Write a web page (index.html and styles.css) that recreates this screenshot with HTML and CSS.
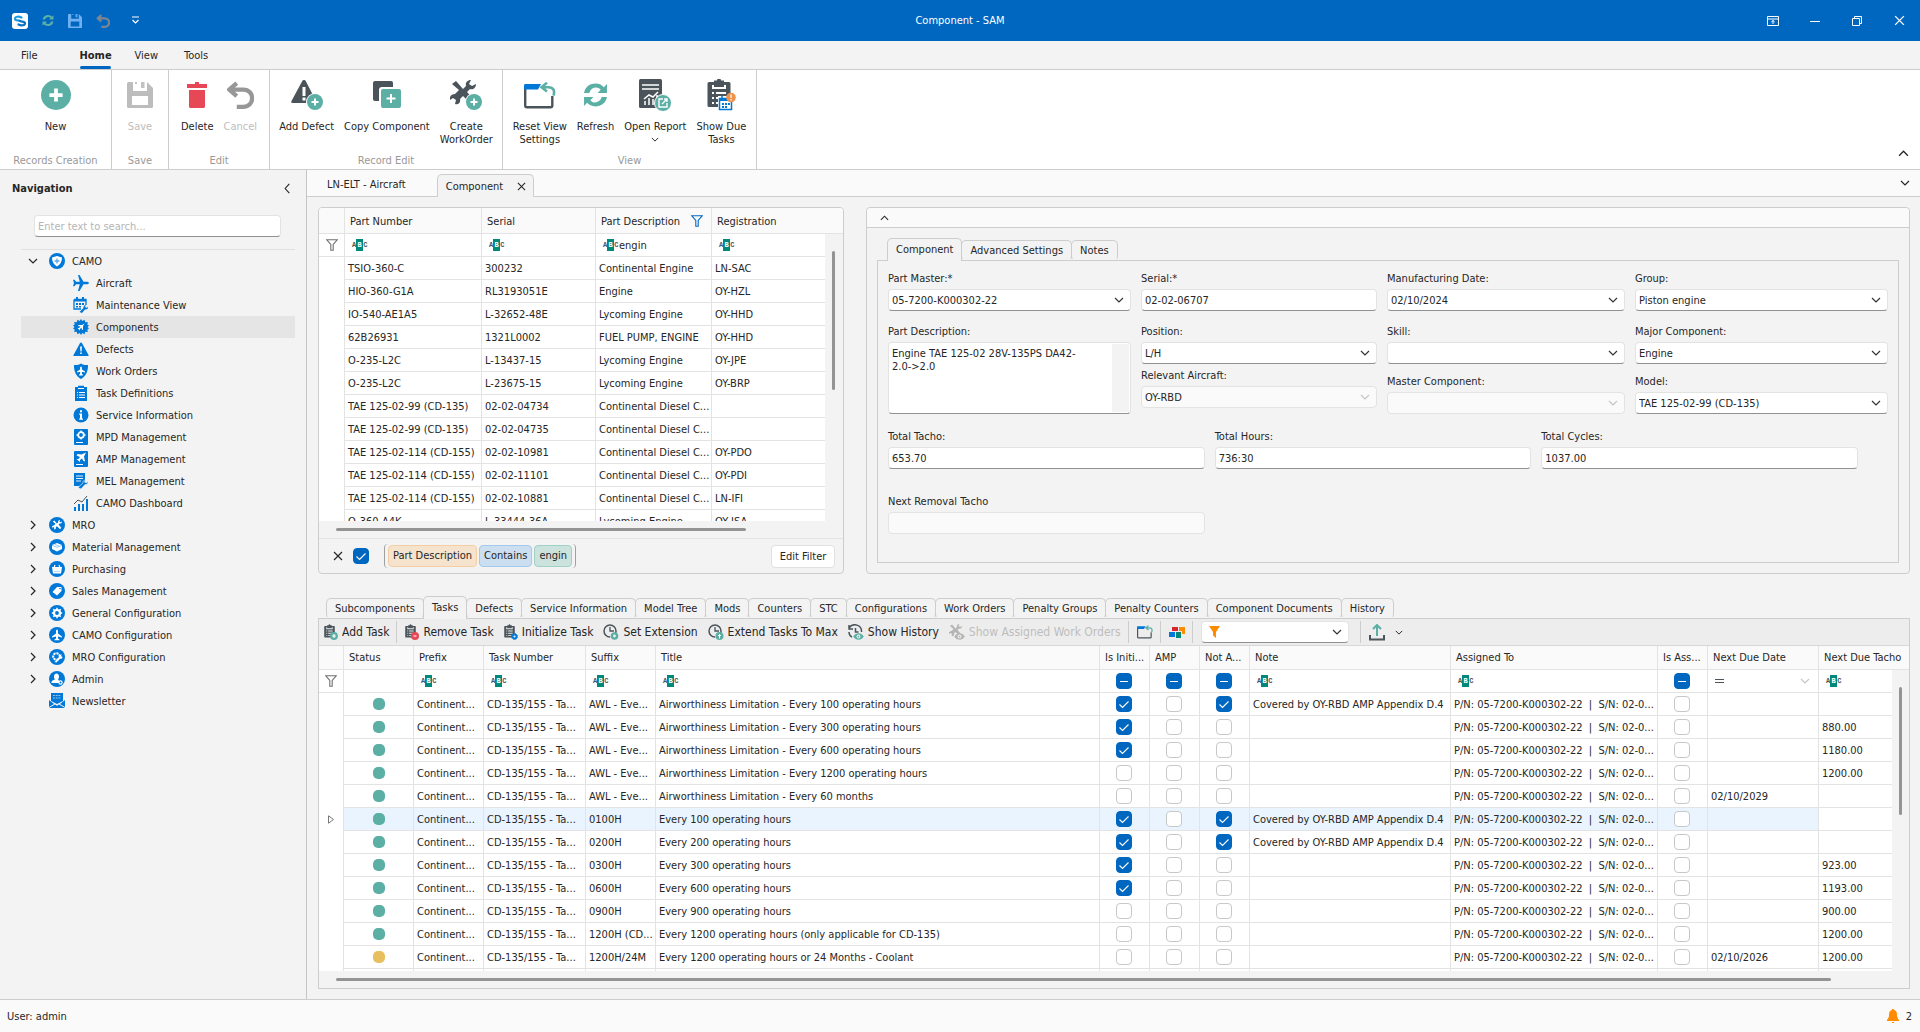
FILE: index.html
```html
<!DOCTYPE html>
<html lang="en">
<head>
<meta charset="utf-8">
<title>Component - SAM</title>
<link rel="stylesheet" href="styles.css">
</head>
<body>
<svg class="sprite" aria-hidden="true">
  <symbol id="i-refresh" viewBox="0 0 24 24"><path d="M1 10C2 4 7 1 12 1c4 0 6 1.500 8 3.500L23 1.500V10h-9l3-3c-3-3.500-9-3-11 3z"/><path d="M23 14c-1 6-6 9-11 9-4 0-6-1.500-8-3.500L1 22.500V14h9l-3 3c3 3.500 9 3 11-3z"/></symbol>
  <symbol id="i-save" viewBox="0 0 26 26"><path fill-rule="evenodd" d="M1.500 0H6v9h14V0l6 6v18.500a1.500 1.500 0 0 1-1.500 1.500h-23A1.500 1.500 0 0 1 0 24.500v-23A1.500 1.500 0 0 1 1.500 0zM5 14v9h16v-9z"/><path d="M14 0h3.500v6H14zM8 0h2v2H8z" opacity=".9"/></symbol>
  <symbol id="i-undo" viewBox="0 0 26 26"><path d="M10 2 3 8l7 6M3 8h13c11 0 11 16 0 16h-6" fill="none" stroke="currentColor" stroke-width="4" stroke-linejoin="round"/></symbol>
  <symbol id="i-down" viewBox="0 0 10 6"><path d="M1 1l4 4 4-4" fill="none" stroke="currentColor" stroke-width="1.200"/></symbol>
  <symbol id="i-up" viewBox="0 0 10 6"><path d="M1 5l4-4 4 4" fill="none" stroke="currentColor" stroke-width="1.200"/></symbol>
  <symbol id="i-right" viewBox="0 0 6 10"><path d="M1 1l4 4-4 4" fill="none" stroke="currentColor" stroke-width="1.200"/></symbol>
  <symbol id="i-left" viewBox="0 0 6 12"><path d="M5.500 1L1 6l4.500 5" fill="none" stroke="currentColor" stroke-width="1.200"/></symbol>
  <symbol id="i-close" viewBox="0 0 10 10"><path d="M1 1l8 8M9 1L1 9" fill="none" stroke="currentColor" stroke-width="1.200"/></symbol>
  <symbol id="i-funnel" viewBox="0 0 12 12"><path d="M.8.8h10.400L7.200 5.500v5.700H4.800V5.500z" fill="none" stroke="currentColor" stroke-width="1.100"/></symbol>
  <symbol id="i-plus" viewBox="0 0 16 16"><circle cx="8" cy="8" r="8" fill="#5bafa5"/><path d="M8 4.500v7M4.500 8h7" stroke="#fff" stroke-width="2"/></symbol>
  <symbol id="i-wrench" viewBox="0 0 26 26"><path d="M2 4l4-3 7 8 3-3c-1-4 2-6 5-6l-2 4 3 2 4-2c0 4-3 6-6 5l-3 3 7 8-3 4-8-8-3 3c1 4-2 6-5 5l1-4-3-2-3 2c-1-4 2-6 5-6l4-4z" fill="currentColor"/></symbol>
  <symbol id="i-plane" viewBox="0 0 16 16"><path d="M16 8c0-.9-1.500-1.300-3-1.300H10.500L6.500 0H5l1.800 6.700H3L1.500 4.700H0L1 8l-1 3.300h1.500L3 9.300h3.800L5 16h1.500l4-6.700H13c1.500 0 3-.4 3-1.300z" fill="currentColor"/></symbol>
  <symbol id="i-clip" viewBox="0 0 24 28"><path fill-rule="evenodd" d="M2 3h5V1.500h3a2 2 0 0 1 4 0h3V3h5a1.500 1.500 0 0 1 1.500 1.500v22A1.500 1.500 0 0 1 22 28H2a1.500 1.500 0 0 1-1.500-1.500v-22A1.500 1.500 0 0 1 2 3zm3 3v4h14V6h-2v2H7V6zm0 7v2h2v-2zm4 0v2h10v-2zm-4 5v2h2v-2zm4 0v2h10v-2zm-4 5v2h2v-2zm4 0v2h10v-2z" fill="#4a545a"/></symbol>
  <symbol id="i-clock" viewBox="0 0 16 16"><circle cx="7" cy="7" r="6" fill="none" stroke="#4a545a" stroke-width="1.500" stroke-dasharray="31 7" stroke-dashoffset="-9"/><path d="M7 3v4h4" fill="none" stroke="#4a545a" stroke-width="1.300"/></symbol>
  <symbol id="i-eye" viewBox="0 0 12 8"><path d="M0 4c3-5 9-5 12 0-3 5-9 5-12 0z" fill="currentColor"/><circle cx="6" cy="4" r="2.200" fill="#eee"/><circle cx="6" cy="4" r="1" fill="currentColor"/></symbol>
  <symbol id="i-reset" viewBox="0 0 32 27"><path d="M1.200 7v16.500c0 1.200.6 1.800 1.800 1.800h23.500c1.200 0 1.800-.6 1.800-1.800V14" fill="none" stroke="#4a545a" stroke-width="2.400"/><path d="M1.500 2H17l-3 5.500H0v-4C0 2.500.5 2 1.500 2z" fill="#0078d7"/><path d="M23 .8l-5.500 4.400L23 9.600M18 5.200h6.500c5 0 6.500 3.300 5 8.500" fill="none" stroke="#5bafa5" stroke-width="2.600"/></symbol>

  <symbol id="n-camo" viewBox="0 0 16 16"><circle cx="8" cy="8" r="8" fill="#0078d7"/><path d="M8 3l5 1.500c0 4-1.500 7-5 9-3.500-2-5-5-5-9z" fill="#fff"/><path d="M8 5.500v5M5.500 8h5" stroke="#5aa7e6" stroke-width="1.300"/></symbol>
  <symbol id="n-aircraft" viewBox="0 0 16 16"><use href="#i-plane" color="#0078d7"/></symbol>
  <symbol id="n-maint" viewBox="0 0 16 16"><path d="M1 2.500h12V8M1 2.500V12h7" fill="none" stroke="#0078d7" stroke-width="1.300"/><path d="M1 2h12v2.500H1zM3 0h2v3H3zM9 0h2v3H9zM3 6h2v2H3zM6 6h2v2H6zM9 6h2v2H9zM3 9h2v1.500H3zM6 9h2v1.500H6z" fill="#0078d7"/><path d="M6.500 15l4-4c-.5-2 1-3 2.500-3L12 10l2 1 1-1.500c.5 2-1 3.500-3 3L9 16z" fill="#0078d7"/></symbol>
  <symbol id="n-comp" viewBox="0 0 16 16"><path d="M8 0l1.300 2L11.500.8l.8 2.400 2.500-.2-.5 2.500L16 6.500 14.500 8 16 9.500l-1.700 1 .5 2.500-2.500-.2-.8 2.400L9.300 14 8 16l-1.300-2-2.200 1.200-.8-2.400L1.200 13l.5-2.500L0 9.500 1.500 8 0 6.500l1.700-1L1.200 3l2.500.2.800-2.400L6.700 2z" fill="#0078d7"/><path d="M11.500 4.500L9 6H5.500l-.5 1 2.500.5L6 9H4.500l2.500 2.500V10L8.500 8.500 9 11l1-.5V7z" fill="#fff"/></symbol>
  <symbol id="n-defect" viewBox="0 0 16 16"><path d="M8 1.500c.6 0 .9.400 1.200.9L15.500 14c.3.600 0 1-.6 1H1.100c-.6 0-.9-.4-.6-1L6.800 2.400c.3-.5.600-.9 1.200-.9z" fill="#0078d7"/><path d="M7.100 5.500h1.800l-.3 5H7.400zM7.200 11.500h1.600V13H7.200z" fill="#fff"/></symbol>
  <symbol id="n-wo" viewBox="0 0 16 16"><path d="M8 .5C10 2 13 2.300 15 2c.2 7-2.500 11.500-7 14C3.500 13.500.8 9 1 2c2 .3 5 0 7-1.500z" fill="#0078d7"/><path d="M8 3.500c.6 0 .9.800.9 1.500v1.500L12 8.500v1l-3.100-.7v2l1 1v.7H6.100v-.7l1-1v-2L4 9.500v-1l3.100-2V5c0-.7.300-1.500.9-1.500z" fill="#fff"/></symbol>
  <symbol id="n-task" viewBox="0 0 16 16"><path d="M2 2h3V.8h6V2h3v14H2z" fill="#0078d7"/><path d="M5 3.500h6M4 7.500h1M6 7.500h6M4 10h1M6 10h6M4 12.500h1M6 12.500h6" stroke="#fff" stroke-width="1"/></symbol>
  <symbol id="n-info" viewBox="0 0 16 16"><circle cx="8" cy="8" r="7.500" fill="#0078d7"/><path d="M7 3.200h2v2H7zM6.200 6.500H9v5h1v1.300H6.200v-1.300H7V7.800h-.8z" fill="#fff"/></symbol>
  <symbol id="n-mpd" viewBox="0 0 16 16"><rect x="1" width="14" height="16" rx="1" fill="#0078d7"/><circle cx="8" cy="6" r="2.800" fill="none" stroke="#fff" stroke-width="1.800"/><path d="M8 1.500v2M8 8.500v2M3.500 6h2M10.500 6h2" stroke="#fff" stroke-width="1.400"/><path d="M3 13.500h7" stroke="#fff"/></symbol>
  <symbol id="n-amp" viewBox="0 0 16 16"><rect x="1" width="14" height="16" rx="1" fill="#0078d7"/><path d="M13 1.500l-2 4 1 5-1.500-.5L9 7.500 7 9v2L3.500 8h2L7 6 3.500 4.500 4.500 3l4 .5z" fill="#fff"/><path d="M3 13.500h7" stroke="#fff"/></symbol>
  <symbol id="n-mel" viewBox="0 0 16 16"><path d="M1 0h11v9l-5 4H1z" fill="#0078d7"/><path d="M3 3h7M3 5.500h7M3 8h5" stroke="#fff" stroke-width=".9"/><path d="M5 14.500l5-4.500c-.5-2 1-3 2.500-3L11.500 9l2 1L15 8.500c.5 2-1 3.500-3 3L8 16z" fill="#0078d7" stroke="#f3f3f3" stroke-width=".6"/></symbol>
  <symbol id="n-dash" viewBox="0 0 16 16"><path d="M1 12h2v4H1zM5 9h2v7H5zM9 9h2v7H9zM13 4h2v12h-2z" fill="#0078d7"/><path d="M1 9l4-4 4 2 5-6" fill="none" stroke="#4a545a"/></symbol>
  <symbol id="n-mro" viewBox="0 0 16 16"><circle cx="8" cy="8" r="8" fill="#0078d7"/><use href="#i-wrench" x="3" y="3" width="10" height="10" color="#fff"/></symbol>
  <symbol id="n-mat" viewBox="0 0 16 16"><circle cx="8" cy="8" r="8" fill="#0078d7"/><path d="M8 4l5 2v4l-5 2.500L3 10V6z" fill="#fff"/><path d="M3 6.300l5 2 5-2M5.500 5.200l5 2.200" fill="none" stroke="#6fb3ea" stroke-width=".7"/></symbol>
  <symbol id="n-pur" viewBox="0 0 16 16"><circle cx="8" cy="8" r="8" fill="#0078d7"/><path d="M3 6h10l-1 6.500H4z" fill="#fff"/><path d="M5 7l1-3M11 7l-1-3" stroke="#fff" stroke-width="1.200"/><path d="M5.500 10.500h5" stroke="#6fb3ea" stroke-dasharray="1 1"/></symbol>
  <symbol id="n-sales" viewBox="0 0 16 16"><circle cx="8" cy="8" r="8" fill="#0078d7"/><path d="M3.500 9L8 4h4.500v4L8 12.500z" fill="#fff"/><circle cx="11" cy="5.500" r=".8" fill="#0078d7"/></symbol>
  <symbol id="n-gen" viewBox="0 0 16 16"><circle cx="8" cy="8" r="8" fill="#0078d7"/><circle cx="8" cy="8" r="3" fill="none" stroke="#fff" stroke-width="2.200"/><path d="M8 2.800v2M8 11.200v2M2.800 8h2M11.200 8h2M4.300 4.300l1.500 1.500M10.200 10.200l1.500 1.500M11.700 4.300l-1.500 1.500M5.800 10.200l-1.500 1.500" stroke="#fff" stroke-width="1.500"/></symbol>
  <symbol id="n-cconf" viewBox="0 0 16 16"><circle cx="8" cy="8" r="8" fill="#0078d7"/><path d="M8 2.500c.7 0 1 1 1 2v2l4 3v1l-4-1v2l1.500 1v.8h-5v-.8l1.500-1v-2l-4 1v-1l4-3v-2c0-1 .3-2 1-2z" fill="#fff"/></symbol>
  <symbol id="n-mconf" viewBox="0 0 16 16"><circle cx="8" cy="8" r="8" fill="#0078d7"/><circle cx="7.500" cy="7.500" r="3.300" fill="none" stroke="#fff" stroke-width="2" stroke-dasharray="2.200 .8"/><path d="M5.500 13l5-5c-.3-1.500.8-2.500 2.500-2.500L12 7l1.500 1c0 1.500-1 2-2.500 1.800L7.500 13.500z" fill="#fff"/></symbol>
  <symbol id="n-admin" viewBox="0 0 16 16"><circle cx="8" cy="8" r="8" fill="#0078d7"/><path d="M5 5.500C5 1.500 10 1.500 10 5.500c0 1.500-.5 2.300-1 3 1 .5 1 1 1 3.500H2.500c0-2 .5-2.500 3.500-3.500-.5-.7-1-1.500-1-3z" fill="#fff"/><circle cx="11.500" cy="11.500" r="1.600" fill="#0078d7" stroke="#fff" stroke-width="1.200"/></symbol>
  <symbol id="n-news" viewBox="0 0 16 16"><path d="M2 0h12v8l-6 3-6-3z" fill="#0078d7"/><path d="M4 2.500h8M4 5h8" stroke="#8cc4f0" stroke-dasharray="2 .7"/><path d="M0 7l5 4-5 3zM16 7l-5 4 5 3zM0 15l6-3.500 2 1.200 2-1.200L16 15H0z" fill="#0078d7"/></symbol>
</svg>

<header class="titlebar">
  <div class="quick">
    <svg class="logo" width="16" height="16" viewBox="0 0 16 16"><rect width="16" height="16" rx="3" fill="#fff"/><path d="M9.500 4.500C6.500 3 3 3.500 3 5.700c0 2.300 4 1.300 5.300 2.500" fill="none" stroke="#1e9be0" stroke-width="2.200" stroke-linecap="round"/><path d="M6.500 11.500c3 1.500 6.500 1 6.500-1.200 0-2.300-4-1.300-5.300-2.500" fill="none" stroke="#0a73c4" stroke-width="2.200" stroke-linecap="round"/></svg>
    <button aria-label="Refresh"><svg width="12" height="13" fill="#5bafa5"><use href="#i-refresh"/></svg></button>
    <button aria-label="Save"><svg width="14" height="14" fill="#6fb0f0"><use href="#i-save"/></svg></button>
    <button aria-label="Undo"><svg width="14" height="14" color="#7d8690"><use href="#i-undo"/></svg></button>
    <button aria-label="Customize" class="customize"><svg width="8" height="9" viewBox="0 0 8 9"><path d="M0 1h7M.5 4l3 3 3-3" fill="none" stroke="#fff" stroke-width="1.200"/></svg></button>
  </div>
  <h1>Component - SAM</h1>
  <div class="winbtns">
    <button aria-label="Ribbon options"><svg width="12" height="10" viewBox="0 0 12 10"><path d="M.5.5h11v9H.5zM.5 3h11M6 8V4.500M4.300 6L6 4.500 7.700 6" fill="none" stroke="#fff"/></svg></button>
    <button aria-label="Minimize"><svg width="10" height="10" viewBox="0 0 10 10"><path d="M0 5.500h10" stroke="#fff"/></svg></button>
    <button aria-label="Restore"><svg width="10" height="10" viewBox="0 0 10 10"><path d="M.5 2.500h7v7h-7zM2.500 2.500v-2h7v7h-2" fill="none" stroke="#fff"/></svg></button>
    <button aria-label="Close"><svg width="11" height="11" color="#fff"><use href="#i-close"/></svg></button>
  </div>
</header>

<nav class="menubar">
  <a href="#">File</a><a href="#" class="on">Home</a><a href="#">View</a><a href="#">Tools</a>
</nav>

<div class="ribbon">
  <section class="group g-new"><div class="btns">
    <button><svg width="30" height="30"><use href="#i-plus"/></svg><span>New</span></button>
  </div><h2>Records Creation</h2></section>
  <section class="group g-save"><div class="btns">
    <button disabled><svg width="26" height="26" fill="#bdbdbd"><use href="#i-save"/></svg><span>Save</span></button>
  </div><h2>Save</h2></section>
  <section class="group g-edit"><div class="btns">
    <button><svg width="20" height="26" viewBox="0 0 20 26" fill="#e74856"><path d="M0 2h8V0h4v2h8v4H0zM2 8h16v16.500a1.500 1.500 0 0 1-1.500 1.500h-13A1.500 1.500 0 0 1 2 24.500z"/></svg><span>Delete</span></button>
    <button disabled><svg width="28" height="28" color="#979797"><use href="#i-undo"/></svg><span>Cancel</span></button>
  </div><h2>Edit</h2></section>
  <section class="group g-record"><div class="btns">
    <button><svg width="32" height="30" viewBox="0 0 32 30"><path d="M13 0c1 0 1.500.5 2 1.500L26 23H1.500C0 23 0 22 .5 21L11 1.500C11.500.5 12 0 13 0z" fill="#4a545a"/><path d="M11.500 7h3v9h-3zM11.500 17.500h3v3h-3z" fill="#fff"/><circle cx="24" cy="22" r="9" fill="#fff"/><use href="#i-plus" x="16" y="14" width="16" height="16"/></svg><span>Add Defect</span></button>
    <button><svg width="28" height="28" viewBox="0 0 28 28"><rect width="20" height="20" rx="2" fill="#4a545a"/><rect x="6" y="6" width="22" height="22" rx="3" fill="#fff"/><rect x="8" y="8" width="20" height="19" rx="2" fill="#5bafa5"/><path d="M18 13v9M13.500 17.500h9" stroke="#fff" stroke-width="2"/></svg><span>Copy Component</span></button>
    <button><svg width="32" height="30" viewBox="0 0 32 30"><use href="#i-wrench" width="26" height="26" color="#4a545a"/><circle cx="24" cy="22" r="9" fill="#fff"/><use href="#i-plus" x="16" y="14" width="16" height="16"/></svg><span>Create<br>WorkOrder</span></button>
  </div><h2>Record Edit</h2></section>
  <section class="group g-view"><div class="btns">
    <button><svg width="32" height="27"><use href="#i-reset"/></svg><span>Reset View<br>Settings</span></button>
    <button><svg width="25" height="26" fill="#5bafa5"><use href="#i-refresh"/></svg><span>Refresh</span></button>
    <button><svg width="32" height="32" viewBox="0 0 32 32"><rect width="23" height="29" rx="1.500" fill="#4a545a"/><path d="M3 6h17M3 10h17" stroke="#fff" stroke-width="1.500"/><path d="M6 26v-4M10 26v-7M14 26v-6M18 26V16M5 20l5-4 4 2 5-5" fill="none" stroke="#fff" stroke-width="1.500"/><circle cx="24" cy="24" r="8.500" fill="#5bafa5" stroke="#fff"/><path d="M24 20h-4v8h8v-4M23 25l5-5M25 20h3v3" fill="none" stroke="#fff" stroke-width="1.400"/></svg><span>Open Report<br><svg class="caret" width="8" height="5"><use href="#i-down"/></svg></span></button>
    <button><svg width="29" height="32" viewBox="0 0 29 32"><use href="#i-clip" width="24" height="28"/><rect x="11" y="17" width="15" height="14" fill="#fff"/><path d="M12.500 19.500h12v11h-12zM15 17v3M22 17v3" fill="none" stroke="#0078d7" stroke-width="1.500"/><path d="M12 19h13v3H12zM15 24h2v2h-2zM18 24h2v2h-2zM21 24h2v2h-2zM15 27h2v2h-2zM18 27h2v2h-2z" fill="#0078d7"/><circle cx="24" cy="18.500" r="4.800" fill="#f0924c"/><path d="M24 15.500v3.500M24 20v1.500" stroke="#fff" stroke-width="1.200"/></svg><span>Show Due<br>Tasks</span></button>
  </div><h2>View</h2></section>
  <button class="collapse" aria-label="Collapse ribbon"><svg width="11" height="7"><use href="#i-up"/></svg></button>
</div>

<div class="main">
  <aside class="nav">
    <div class="navhead"><h2>Navigation</h2><button aria-label="Collapse navigation"><svg width="6" height="11"><use href="#i-left"/></svg></button></div>
    <input class="field search" type="text" placeholder="Enter text to search..." aria-label="Search navigation">
    <ul class="tree" id="tree"></ul>
  </aside>

  <div class="content">
    <div class="doctabs">
      <button class="doc">LN-ELT - Aircraft</button>
      <div class="doc on"><span>Component</span><button aria-label="Close tab"><svg width="9" height="9"><use href="#i-close"/></svg></button></div>
      <button class="more" aria-label="More tabs"><svg width="10" height="6"><use href="#i-down"/></svg></button>
    </div>

    <div class="workspace">
      <div class="top">
        <section class="panel list">
          <div class="scroller">
            <table id="components">
              <colgroup><col class="w26"><col><col class="w114"><col class="w116"><col class="w113"><col class="w18"></colgroup>
              <thead><tr><th></th><th>Part Number</th><th>Serial</th><th><span class="fhead">Part Description <svg width="12" height="12" color="#0067c0"><use href="#i-funnel"/></svg></span></th><th colspan="2">Registration</th></tr></thead>
              <tbody></tbody>
            </table>
            <div class="vthumb v1"></div>
          </div>
          <div class="hthumb h1"></div>
          <div class="filterbar">
            <button class="plain" aria-label="Clear filter"><svg width="10" height="10"><use href="#i-close"/></svg></button>
            <input type="checkbox" class="check" checked aria-label="Filter enabled">
            <div class="expr"><span class="chip c1">Part Description</span><span class="chip c2">Contains</span><span class="chip c3">engin</span></div>
            <button class="editfilter">Edit Filter</button>
          </div>
        </section>

        <section class="panel details">
          <div class="phead"><button class="plain" aria-label="Collapse"><svg width="9" height="6"><use href="#i-up"/></svg></button></div>
          <div class="pbody">
            <div class="tabs"><button class="on">Component</button><button>Advanced Settings</button><button>Notes</button></div>
            <form class="form">
              <div class="cols">
                <div class="stack"><label for="pm">Part Master:*</label><select id="pm" class="field"><option>05-7200-K000302-22</option></select></div>
                <div class="stack"><label for="se">Serial:*</label><input id="se" class="field" type="text" value="02-02-06707"></div>
                <div class="stack"><label for="md">Manufacturing Date:</label><select id="md" class="field"><option>02/10/2024</option></select></div>
                <div class="stack"><label for="gr">Group:</label><select id="gr" class="field"><option>Piston engine</option></select></div>
              </div>
              <div class="cols second">
                <div class="stack"><label for="pd">Part Description:</label><div class="area"><textarea id="pd">Engine TAE 125-02 28V-135PS DA42-
2.0-&gt;2.0</textarea></div></div>
                <div class="stack tight"><div class="stack"><label for="po">Position:</label><select id="po" class="field"><option>L/H</option></select></div>
                  <div class="stack"><label for="ra">Relevant Aircraft:</label><select id="ra" class="field" disabled><option>OY-RBD</option></select></div></div>
                <div class="stack loose"><div class="stack"><label for="sk">Skill:</label><select id="sk" class="field"><option></option></select></div>
                  <div class="stack"><label for="mc">Master Component:</label><select id="mc" class="field" disabled><option></option></select></div></div>
                <div class="stack loose"><div class="stack"><label for="mj">Major Component:</label><select id="mj" class="field"><option>Engine</option></select></div>
                  <div class="stack"><label for="mo">Model:</label><select id="mo" class="field"><option>TAE 125-02-99 (CD-135)</option></select></div></div>
              </div>
              <div class="totals">
                <div class="stack"><label for="tt">Total Tacho:</label><input id="tt" class="field" type="text" value="653.70"></div>
                <div class="stack"><label for="th">Total Hours:</label><input id="th" class="field" type="text" value="736:30"></div>
                <div class="stack"><label for="tc">Total Cycles:</label><input id="tc" class="field" type="text" value="1037.00"></div>
                <div class="stack"><label for="nr">Next Removal Tacho</label><input id="nr" class="field" type="text" disabled></div>
              </div>
            </form>
          </div>
        </section>
      </div>

      <section class="bottom">
        <div class="tabs lower"><button>Subcomponents</button><button class="on">Tasks</button><button>Defects</button><button>Service Information</button><button>Model Tree</button><button>Mods</button><button>Counters</button><button>STC</button><button>Configurations</button><button>Work Orders</button><button>Penalty Groups</button><button>Penalty Counters</button><button>Component Documents</button><button>History</button></div>
        <div class="panel tasks">
          <div class="toolbar">
            <button><svg width="14" height="16" viewBox="0 0 14 16"><use href="#i-clip" width="11" height="14"/><circle cx="10" cy="12" r="2.800" fill="#eee" stroke="#5bafa5" stroke-width="2.200"/></svg>Add Task</button>
            <i class="sep"></i>
            <button><svg width="14" height="16" viewBox="0 0 14 16"><use href="#i-clip" width="11" height="14"/><circle cx="10" cy="12" r="4" fill="#e74856"/><path d="M8.500 12h3" stroke="#fff"/></svg>Remove Task</button>
            <button><svg width="14" height="16" viewBox="0 0 14 16"><use href="#i-clip" width="11" height="14"/><circle cx="10.500" cy="12.500" r="2" fill="#eee" stroke="#0078d7" stroke-width="1.800"/><circle cx="10.500" cy="12.500" r="3" fill="none" stroke="#0078d7" stroke-width="1" stroke-dasharray="1.200 1.150"/></svg>Initialize Task</button>
            <button><svg width="16" height="16" viewBox="0 0 16 16"><use href="#i-clock"/><circle cx="11.500" cy="12" r="2.600" fill="#eee" stroke="#5bafa5" stroke-width="2.400"/></svg>Set Extension</button>
            <button><svg width="16" height="16" viewBox="0 0 16 16"><use href="#i-clock"/><circle cx="11.500" cy="12" r="4" fill="#5bafa5"/><path d="M11.500 14.500v-4M10 12l1.500-1.500L13 12" fill="none" stroke="#fff"/></svg>Extend Tasks To Max</button>
            <button><svg width="16" height="16" viewBox="0 0 16 16" color="#5bafa5"><path d="M1 4c4-6 13-3 12.500 4M1 1v4h4M1 8c0 2 1 4 3 5M7.500 4v4h3" fill="none" stroke="#4a545a" stroke-width="1.500"/><use href="#i-eye" x="5" y="9" width="11" height="7"/></svg>Show History</button>
            <button disabled><svg width="16" height="16" viewBox="0 0 16 16" color="#b5b5b5"><use href="#i-wrench" width="13" height="13"/><use href="#i-eye" x="5" y="9" width="11" height="7"/></svg>Show Assigned Work Orders</button>
            <i class="sep"></i>
            <button class="sq" aria-label="Reset view"><svg width="16" height="14"><use href="#i-reset"/></svg></button>
            <i class="sep"></i>
            <button class="sq" aria-label="Appearance"><svg width="16" height="11" viewBox="0 0 16 11"><path d="M3 0h6v4H3z" fill="#d9232e"/><path d="M10 0h6v7h-3V4h-3z" fill="#ff8c00"/><path d="M0 5h6v5H0z" fill="#0078d7"/><path d="M7 5h5v6H7z" fill="#00897b"/></svg></button>
            <i class="sep"></i>
            <div class="fsel"><svg width="11" height="12" viewBox="0 0 11 12"><path d="M0 0h11L7 6v6L4 9.500V6z" fill="#ff8c00"/></svg><select class="field" aria-label="Saved filter"><option></option></select></div>
            <i class="sep wide"></i>
            <button class="sq" aria-label="Export"><svg width="16" height="17" viewBox="0 0 16 17"><path d="M1 11v4.500h14V11" fill="none" stroke="#4a545a" stroke-width="2"/><path d="M8 12V2M4 5l4-4 4 4" fill="none" stroke="#5bafa5" stroke-width="2"/></svg></button>
            <button class="sq" aria-label="Export options"><svg width="8" height="5"><use href="#i-down"/></svg></button>
          </div>
          <div class="scroller">
            <table id="tasks">
              <colgroup><col class="w25"><col class="w70"><col class="w70"><col class="w102"><col class="w70"><col><col class="w50"><col class="w50"><col class="w50"><col class="w201"><col class="w207"><col class="w50"><col class="w111"><col class="w73"><col class="w17"></colgroup>
              <thead><tr><th></th><th>Status</th><th>Prefix</th><th>Task Number</th><th>Suffix</th><th>Title</th><th>Is Initi...</th><th>AMP</th><th>Not A...</th><th>Note</th><th>Assigned To</th><th>Is Ass...</th><th>Next Due Date</th><th colspan="2">Next Due Tacho</th></tr></thead>
              <tbody></tbody>
            </table>
            <div class="vthumb v2"></div>
          </div>
          <div class="hthumb h2"></div>
        </div>
      </section>
    </div>
  </div>
</div>

<footer class="status"><span>User: admin</span><span class="bell"><svg width="12" height="14" viewBox="0 0 12 14"><path d="M6 0c.8 0 1.200.4 1.200 1C9.500 1.600 10 3.500 10 6c0 2.500.7 3 2 5v1H0v-1c1.300-2 2-2.500 2-5 0-2.500.5-4.400 2.800-5 0-.6.400-1 1.200-1zM5 13h2v1H5z" fill="#ff8c00"/></svg>2</span></footer>
<script src="script.js"></script>
</body>
</html>
```
FILE: styles.css
```css
:root {
  --blue: #0067c0;
  --text: #262626;
  --line: #cdcdcd;
  --grid: #e3e3e3;
  --bg: #f3f3f3;
  --light: #fafafa;
}
* { box-sizing: border-box; }
body {
  margin: 0;
  height: 100vh;
  display: flex;
  flex-direction: column;
  overflow: hidden;
  background: var(--bg);
  color: var(--text);
  font: 11px/13px "DejaVu Sans Condensed", "Noto Sans", sans-serif;
}
h1, h2 { margin: 0; font-size: inherit; font-weight: normal; }
button, input, select, textarea { font: inherit; color: inherit; margin: 0; }
button { border: 0; padding: 0; background: none; }
svg { flex: none; display: block; }
.sprite { position: absolute; width: 0; height: 0; }

.titlebar {
  flex: none;
  display: grid;
  grid-template-columns: 1fr auto 1fr;
  align-items: center;
  height: 41px;
  background: var(--blue);
  color: #fff;
}
.quick { display: flex; align-items: center; gap: 14px; padding-left: 12px; }
.customize { margin-left: 8px; }
.winbtns { display: flex; justify-content: flex-end; }
.winbtns button { width: 42px; height: 41px; display: grid; place-items: center; }

.menubar { flex: none; display: flex; height: 29px; padding-left: 10px; border-bottom: 1px solid var(--line); }
.menubar a { display: flex; align-items: center; padding: 0 11px; color: inherit; text-decoration: none; }
.menubar .on { position: relative; margin: 0 1px 0 20px; font-weight: bold; }
.menubar a:nth-child(3) { margin-right: 4px; }
.menubar .on::after { content: ""; position: absolute; left: 12px; right: 12px; bottom: 0; height: 3px; border-radius: 2px; background: var(--blue); }

.ribbon { flex: none; display: flex; height: 100px; background: #fff; border-bottom: 1px solid var(--line); }
.group { display: flex; flex-direction: column; align-items: center; border-right: 1px solid var(--line); }
.g-new { width: 112px; }
.g-save { width: 57px; }
.g-edit { width: 101px; }
.g-record { width: 233px; }
.g-view { width: 254px; }
.btns { flex: 1; display: flex; }
.btns button { display: grid; grid-template-rows: 50px 1fr; justify-items: center; align-items: start; padding: 0 5px; white-space: nowrap; }
.btns button > svg { align-self: center; }
.btns .caret { margin: 4px auto; }
.group h2 { color: #999; line-height: 16px; height: 16px; }
button:disabled { color: #bdbdbd; }
.collapse { margin-left: auto; padding: 0 11px 12px; align-self: flex-end; }

.main { flex: 1; min-height: 0; display: flex; }
.nav { width: 307px; flex: none; border-right: 1px solid #c5c5c5; }
.navhead { display: flex; justify-content: space-between; align-items: center; height: 36px; padding: 0 16px 0 12px; }
.navhead h2 { font-weight: bold; }
.field {
  width: 100%;
  height: 22px;
  padding: 0 3px;
  border: 1px solid #e3e3e3;
  border-bottom-color: #919191;
  border-radius: 4px;
  background: #fff;
  outline: 0;
}
.search { display: block; width: 247px; margin: 9px 25px 12px 34px; }
.search::placeholder { color: #b5b5b5; opacity: 1; }
.tree { list-style: none; margin: 0 11px 0 21px; padding: 0; border-top: 1px solid #e0e0e0; }
.tree a { display: flex; align-items: center; height: 22px; color: inherit; text-decoration: none; padding-left: 7px; }
.tree a > i { width: 21px; display: flex; }
.tree a > .right { padding-left: 2px; }
.tree a > svg { margin-right: 7px; }
.tree .child { padding-left: 52px; }
.tree .sel { background: #e5e5e5; }

.content { flex: 1; min-width: 0; display: flex; flex-direction: column; }
.doctabs { flex: none; display: flex; align-items: flex-end; height: 27px; background: var(--light); border-bottom: 1px solid var(--line); }
.doc { height: 23px; padding: 0 10px; margin-left: 10px; }
.doc.on { display: flex; align-items: center; gap: 14px; width: 97px; padding: 0 8px; margin: 0 0 -1px 21px; border: 1px solid var(--line); border-bottom: 0; border-radius: 5px 5px 0 0; background: var(--bg); }
.more { margin: 0 10px 10px auto; }

.workspace { flex: 1; min-height: 0; display: flex; flex-direction: column; padding: 10px 10px 10px 11px; }
.top { flex: none; display: grid; grid-template-columns: 526fr 1044fr; gap: 22px; }
.panel { border: 1px solid var(--line); border-radius: 4px; min-width: 0; }
.list { display: flex; flex-direction: column; overflow: hidden; }
.scroller { flex: 1 1 0; min-height: 0; overflow: hidden; position: relative; }
table { width: 100%; table-layout: fixed; border-collapse: separate; border-spacing: 0; }
.w17 { width: 17px; } .w18 { width: 18px; } .w25 { width: 25px; } .w26 { width: 26px; }
.w50 { width: 50px; } .w70 { width: 70px; } .w73 { width: 73px; } .w102 { width: 102px; }
.w111 { width: 111px; } .w113 { width: 113px; } .w114 { width: 114px; } .w116 { width: 116px; }
.w201 { width: 201px; } .w207 { width: 207px; }
th, td {
  height: 23px;
  padding: 0 0 0 3px;
  text-align: left;
  white-space: pre;
  overflow: hidden;
  font-weight: normal;
  border-right: 1px solid var(--grid);
  border-bottom: 1px solid var(--grid);
  background: #fff;
}
th { height: 26px; padding: 1px 0 0 5px; background: var(--light); }
#tasks th { height: 24px; padding-top: 0; }
th:last-child { border-right: 0; }
td.gutter { background: var(--bg); border: 0; padding: 0; }
td.last { border-right: 0; }
td.ind { border-bottom: 0; padding: 0; color: #707070; }
.frow td.ind { border-bottom: 1px solid var(--grid); }
td.ind svg { margin: auto; }
td.mid { padding: 0; text-align: center; }
.fhead { display: flex; justify-content: space-between; padding-right: 8px; }
.frow div { display: flex; align-items: center; padding-left: 4px; }
.frow input[type=text] { flex: 1; min-width: 0; width: 0; border: 0; padding: 0; background: none; outline: 0; }
.abc { flex: none; display: flex; align-items: center; width: 16px; font: bold 7px/12px "Liberation Mono", monospace; color: #4a545a; }
.abc b { width: 7px; text-align: center; background: #00897b; color: #fff; }
.selected td { background: #e9f4fe; }
.selected td.ind, .selected td.last { background: #fff; }
.selected td.gutter { background: var(--bg); }
.dot { display: block; width: 12px; height: 12px; margin: auto; border-radius: 5px; background: #5bafa5; }
.dot.amber { background: #e8bf5e; }
.due { justify-content: space-between; color: #c5c5c5; padding-right: 8px; }
.check {
  appearance: none;
  display: block;
  width: 16px;
  height: 16px;
  border: 1px solid #c8c8c8;
  border-radius: 4px;
  background: #fff center / 16px 16px no-repeat;
}
td .check { margin: auto; }
.check:checked, .check:indeterminate { border-color: var(--blue); background-color: var(--blue); background-position: -1px -1px; }
.check:checked { background-image: url("data:image/svg+xml,%3Csvg xmlns='http://www.w3.org/2000/svg' viewBox='0 0 16 16'%3E%3Cpath d='M3.500 8.500l3 3 6-6' fill='none' stroke='white' stroke-width='1.100'/%3E%3C/svg%3E"); }
.check:indeterminate { background-image: url("data:image/svg+xml,%3Csvg xmlns='http://www.w3.org/2000/svg' viewBox='0 0 16 16'%3E%3Cpath d='M4 8.500h8' stroke='white'/%3E%3C/svg%3E"); }
.vthumb { position: absolute; width: 3px; border-radius: 2px; background: #949494; }
.v1 { right: 8px; top: 43px; height: 139px; }
.v2 { right: 7px; top: 41px; height: 128px; }
.hthumb { flex: none; height: 3px; border-radius: 2px; background: #949494; }
.h1 { margin: 7px 97px 7px 17px; }
.h2 { margin: 7px 78px 7px 17px; }
.filterbar { flex: none; display: flex; align-items: center; height: 35px; border-top: 1px solid var(--grid); padding: 0 8px 0 14px; }
.plain { display: flex; }
.filterbar .check { margin: 0 15px 0 10px; }
.expr { display: flex; gap: 2px; padding: 0 3px; height: 24px; align-items: center; border: 1px solid #a0a0a0; border-width: 0 1px; border-radius: 4px; }
.chip { padding: 0 4px; line-height: 20px; border: 1px solid; border-radius: 4px; }
.c1 { background: #f6e3cd; border-color: #f5cfa3; }
.c2 { background: #cbdff0; border-color: #a3caec; }
.c3 { background: #cbe2dd; border-color: #9fd2c7; }
.editfilter { margin-left: auto; width: 64px; height: 23px; border: 1px solid #e0e0e0; border-radius: 4px; background: #fff; }

.phead { height: 20px; display: flex; align-items: center; padding-left: 13px; background: var(--light); border-bottom: 1px solid var(--line); border-radius: 4px 4px 0 0; }
.pbody { padding: 10px; }
.tabs { display: flex; align-items: flex-end; height: 22px; padding-left: 10px; position: relative; }
.tabs button { height: 20px; padding: 0 8px; border: 1px solid var(--line); border-bottom-color: transparent; border-radius: 5px 5px 4px 4px; margin-right: -1px; white-space: nowrap; }
.tabs .on { height: 23px; padding-bottom: 2px; margin-bottom: -1px; background: var(--bg); border-bottom: 0; border-radius: 5px 5px 0 0; }
.form { border: 1px solid var(--line); padding: 8px 10px 28px; }
.cols { display: grid; grid-template-columns: 243fr 236fr 238fr 253fr; gap: 10px; }
.second { margin-top: 11px; }
.stack { display: flex; flex-direction: column; }
.stack label { line-height: 20px; height: 20px; }
.tight { gap: 2px; }
.loose { gap: 8px; }
select.field {
  appearance: none;
  padding-right: 20px;
  background: #fff url("data:image/svg+xml,%3Csvg xmlns='http://www.w3.org/2000/svg' width='10' height='6'%3E%3Cpath d='M1 1l4 4 4-4' fill='none' stroke='%23333' stroke-width='1.200'/%3E%3C/svg%3E") right 6px center no-repeat;
}
.field:disabled { background-color: var(--light); border-color: #e3e3e3; color: var(--text); opacity: 1; }
select.field:disabled { background-image: url("data:image/svg+xml,%3Csvg xmlns='http://www.w3.org/2000/svg' width='10' height='6'%3E%3Cpath d='M1 1l4 4 4-4' fill='none' stroke='%23c5c5c5' stroke-width='1.200'/%3E%3C/svg%3E"); }
.area { height: 72px; display: flex; padding: 1px 1px 1px 0; border: 1px solid #e3e3e3; border-bottom-color: #919191; border-radius: 4px; background: #fff; }
textarea { flex: 1; min-width: 0; border: 0; border-right: 17px solid var(--bg); padding: 3px; resize: none; outline: 0; background: none; overflow: hidden; }
.totals { display: grid; grid-template-columns: repeat(3, 1fr); gap: 23px 10px; margin: 13px 30px 0 0; }

.bottom { flex: 1; min-height: 0; display: flex; flex-direction: column; margin-top: 22px; }
.tabs.lower { flex: none; padding-left: 8px; }
.tasks { flex: 1; min-height: 0; display: flex; flex-direction: column; border-radius: 0; }
.toolbar { flex: none; display: flex; align-items: center; height: 27px; padding-left: 5px; background: #ededed; border-bottom: 1px solid #d8d8d8; font-size: 12px; }
.toolbar button { display: flex; align-items: center; gap: 4px; margin-right: 10px; white-space: nowrap; }
.sep { width: 1px; height: 22px; background: #cdcdcd; margin-left: -3px; margin-right: 8px; }
.fsel { display: flex; align-items: center; width: 148px; position: relative; }
.fsel svg { position: absolute; left: 8px; }
.sep.wide { margin-left: 11px; }

.status { flex: none; display: flex; justify-content: space-between; align-items: center; height: 33px; padding: 0 8px 0 7px; border-top: 1px solid var(--line); background: var(--light); }
.bell { display: flex; align-items: center; gap: 7px; }
```
FILE: script.js
```js
const icon = (id, w, h) => `<svg width="${w}" height="${h}"><use href="#${id}"/></svg>`;

const tree = [
  ['CAMO', 'n-camo', 'open'],
  ['Aircraft', 'n-aircraft', 'child'], ['Maintenance View', 'n-maint', 'child'],
  ['Components', 'n-comp', 'child sel'], ['Defects', 'n-defect', 'child'],
  ['Work Orders', 'n-wo', 'child'], ['Task Definitions', 'n-task', 'child'],
  ['Service Information', 'n-info', 'child'], ['MPD Management', 'n-mpd', 'child'],
  ['AMP Management', 'n-amp', 'child'], ['MEL Management', 'n-mel', 'child'],
  ['CAMO Dashboard', 'n-dash', 'child'],
  ['MRO', 'n-mro', 'closed'], ['Material Management', 'n-mat', 'closed'],
  ['Purchasing', 'n-pur', 'closed'], ['Sales Management', 'n-sales', 'closed'],
  ['General Configuration', 'n-gen', 'closed'], ['CAMO Configuration', 'n-cconf', 'closed'],
  ['MRO Configuration', 'n-mconf', 'closed'], ['Admin', 'n-admin', 'closed'],
  ['Newsletter', 'n-news', 'leaf'],
];
document.getElementById('tree').innerHTML = tree.map(([text, id, kind]) => {
  const arrow = kind === 'open' ? `<i class="down">${icon('i-down', 10, 6)}</i>`
    : kind === 'closed' ? `<i class="right">${icon('i-right', 6, 10)}</i>`
    : kind === 'leaf' ? '<i></i>' : '';
  return `<li><a href="#" class="${kind}">${arrow}${icon(id, 16, 16)}${text}</a></li>`;
}).join('');

const abc = '<span class="abc">A<b>B</b>C</span>';
const filter = (name, value = '') => `<td><div>${abc}<input type="text" value="${value}" aria-label="Filter ${name}"></div></td>`;
const funnel = `<td class="ind">${icon('i-funnel', 12, 12)}</td>`;

const diesel = 'Continental Diesel C...';
const parts = [
  ['TSIO-360-C', '300232', 'Continental Engine', 'LN-SAC'],
  ['HIO-360-G1A', 'RL3193051E', 'Engine', 'OY-HZL'],
  ['IO-540-AE1A5', 'L-32652-48E', 'Lycoming Engine', 'OY-HHD'],
  ['62B26931', '1321L0002', 'FUEL PUMP, ENGINE', 'OY-HHD'],
  ['O-235-L2C', 'L-13437-15', 'Lycoming Engine', 'OY-JPE'],
  ['O-235-L2C', 'L-23675-15', 'Lycoming Engine', 'OY-BRP'],
  ['TAE 125-02-99 (CD-135)', '02-02-04734', diesel, ''],
  ['TAE 125-02-99 (CD-135)', '02-02-04735', diesel, ''],
  ['TAE 125-02-114 (CD-155)', '02-02-10981', diesel, 'OY-PDO'],
  ['TAE 125-02-114 (CD-155)', '02-02-11101', diesel, 'OY-PDI'],
  ['TAE 125-02-114 (CD-155)', '02-02-10881', diesel, 'LN-IFI'],
  ['O-360-A4K', 'L-33444-36A', 'Lycoming Engine', 'OY-JSA'],
];
document.querySelector('#components tbody').innerHTML =
  `<tr class="frow">${funnel}${filter('part number')}${filter('serial')}${filter('part description', 'engin')}${filter('registration').replace('<td>', '<td class="last">')}<td class="gutter"></td></tr>` +
  parts.map(p => `<tr><td class="ind"></td>${p.map((c, i) => `<td${i === 3 ? ' class="last"' : ''}>${c}</td>`).join('')}<td class="gutter"></td></tr>`).join('');

const note = 'Covered by OY-RBD AMP Appendix D.4';
const title = 'Airworthiness Limitation - Every ';
const awl = 'AWL - Eve...';
const tasks = [
  [awl, title + '100 operating hours', 1, 1, note, '', ''],
  [awl, title + '300 operating hours', 1, 0, '', '', '880.00'],
  [awl, title + '600 operating hours', 1, 0, '', '', '1180.00'],
  [awl, title + '1200 operating hours', 0, 0, '', '', '1200.00'],
  [awl, title + '60 months', 0, 0, '', '02/10/2029', ''],
  ['0100H', 'Every 100 operating hours', 1, 1, note, '', ''],
  ['0200H', 'Every 200 operating hours', 1, 1, note, '', ''],
  ['0300H', 'Every 300 operating hours', 1, 0, '', '', '923.00'],
  ['0600H', 'Every 600 operating hours', 1, 0, '', '', '1193.00'],
  ['0900H', 'Every 900 operating hours', 0, 0, '', '', '900.00'],
  ['1200H (CD...', 'Every 1200 operating hours (only applicable for CD-135)', 0, 0, '', '', '1200.00'],
  ['1200H/24M', 'Every 1200 operating hours or 24 Months - Coolant', 0, 0, '', '02/10/2026', '1200.00'],
];
const check = (on, label, cls = '') => `<td class="mid"><input type="checkbox" class="check ${cls}" aria-label="${label}"${on ? ' checked' : ''}></td>`;
document.querySelector('#tasks tbody').innerHTML =
  `<tr class="frow">${funnel}<td></td>${filter('prefix')}${filter('task number')}${filter('suffix')}${filter('title')}` +
  check(0, 'Filter initialized', 'any') + check(0, 'Filter AMP', 'any') + check(0, 'Filter not applicable', 'any') +
  filter('note') + filter('assigned to') + check(0, 'Filter assigned', 'any') +
  `<td><div class="due"><svg width="9" height="5" viewBox="0 0 9 5"><path d="M0 .5h9M0 3.500h9" stroke="#4a545a"/></svg>${icon('i-down', 10, 6)}</div></td>` +
  filter('tacho').replace('<td>', '<td class="last">') + '<td class="gutter"></td></tr>' +
  tasks.map(([suffix, name, init, na, n, date, tacho], i) =>
    `<tr${i === 5 ? ' class="selected"' : ''}><td class="ind">${i === 5 ? '<svg width="6" height="9" viewBox="0 0 6 9"><path d="M.5.8l5 3.700-5 3.700z" fill="none" stroke="#777"/></svg>' : ''}</td>` +
    `<td class="mid"><span class="dot${i === 11 ? ' amber' : ''}"></span></td><td>Continent...</td><td>CD-135/155 - Ta...</td><td>${suffix}</td><td>${name}</td>` +
    check(init, 'Initialized') + check(0, 'AMP') + check(na, 'Not applicable') +
    `<td>${n}</td><td>P/N: 05-7200-K000302-22  |  S/N: 02-0...</td>${check(0, 'Assigned')}<td>${date}</td><td class="last">${tacho}</td><td class="gutter"></td></tr>`).join('') +
  `<tr><td class="ind"></td>${'<td></td>'.repeat(12)}<td class="last"></td><td class="gutter"></td></tr>`;
document.querySelectorAll('.any').forEach(c => { c.indeterminate = true; });
```
